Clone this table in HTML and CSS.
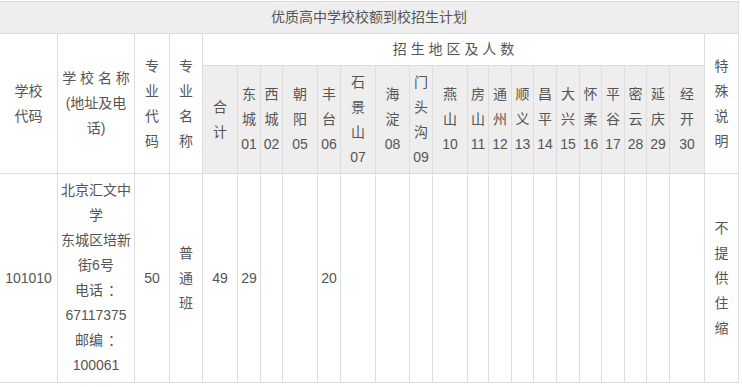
FILE: index.html
```html
<!DOCTYPE html>
<html lang="zh-CN">
<head>
<meta charset="utf-8">
<title>优质高中学校校额到校招生计划</title>
<link rel="stylesheet" href="styles.css">
</head>
<body>
<table class="plan">
  <colgroup>
    <col class="c58"><col class="c77"><col class="c35"><col class="c33">
    <col class="c35"><col class="c23"><col class="c22"><col class="c35"><col class="c23">
    <col class="c35"><col class="c34"><col class="c23"><col class="c35"><col class="c21">
    <col class="c23"><col class="c22"><col class="c23"><col class="c23"><col class="c22">
    <col class="c23"><col class="c22"><col class="c23"><col class="c35"><col class="c34">
  </colgroup>
  <tr class="row-title">
    <th class="title" colspan="24">优质高中学校校额到校招生计划</th>
  </tr>
  <tr class="row-head">
    <th rowspan="2">学校<br>代码</th>
    <th rowspan="2">学 校 名 称<br>(地址及电<br>话)</th>
    <th rowspan="2">专<br>业<br>代<br>码</th>
    <th rowspan="2">专<br>业<br>名<br>称</th>
    <th colspan="19">招 生 地 区 及 人 数</th>
    <th rowspan="2">特<br>殊<br>说<br>明</th>
  </tr>
  <tr class="row-sub">
    <th class="sub">合<br>计</th>
    <th class="sub">东<br>城<br>01</th>
    <th class="sub">西<br>城<br>02</th>
    <th class="sub">朝<br>阳<br>05</th>
    <th class="sub">丰<br>台<br>06</th>
    <th class="sub">石<br>景<br>山<br>07</th>
    <th class="sub">海<br>淀<br>08</th>
    <th class="sub">门<br>头<br>沟<br>09</th>
    <th class="sub">燕<br>山<br>10</th>
    <th class="sub">房<br>山<br>11</th>
    <th class="sub">通<br>州<br>12</th>
    <th class="sub">顺<br>义<br>13</th>
    <th class="sub">昌<br>平<br>14</th>
    <th class="sub">大<br>兴<br>15</th>
    <th class="sub">怀<br>柔<br>16</th>
    <th class="sub">平<br>谷<br>17</th>
    <th class="sub">密<br>云<br>28</th>
    <th class="sub">延<br>庆<br>29</th>
    <th class="sub">经<br>开<br>30</th>
  </tr>
  <tr class="row-data">
    <td>101010</td>
    <td>北京汇文中<br>学<br>东城区培新<br>街6号<br>电话<span class="fw">：</span><br>67117375<br>邮编<span class="fw">：</span><br>100061</td>
    <td>50</td>
    <td>普<br>通<br>班</td>
    <td>49</td>
    <td>29</td>
    <td></td>
    <td></td>
    <td>20</td>
    <td></td>
    <td></td>
    <td></td>
    <td></td>
    <td></td>
    <td></td>
    <td></td>
    <td></td>
    <td></td>
    <td></td>
    <td></td>
    <td></td>
    <td></td>
    <td></td>
    <td>不<br>提<br>供<br>住<br>缩</td>
  </tr>
</table>
</body>
</html>
```

FILE: styles.css
```css
html, body {
  margin: 0;
  padding: 0;
  background: #ffffff;
}

.plan {
  border-collapse: collapse;
  table-layout: fixed;
  width: 740px;
  margin: 1px 0 0 -1px;
  font-family: "Liberation Sans", "Noto Sans CJK SC", sans-serif;
  font-size: 14px;
  line-height: 25px;
  color: #555555;
}

.plan th,
.plan td {
  border: 1px solid #dddddd;
  padding: 0;
  text-align: center;
  vertical-align: middle;
  font-weight: normal;
  background: #ffffff;
  overflow: hidden;
}

.plan .title,
.plan .sub {
  background: #eeeeee;
}

/* full-width colon drawn centred in its em box, as in the source font */
.fw {
  padding-left: 5px;
  margin-right: -5px;
}

.row-title { height: 32px; }
.row-head { height: 32px; }
.row-sub { height: 108px; }
.row-data { height: 209px; }

.c58 { width: 58px; }
.c77 { width: 77px; }
.c35 { width: 35px; }
.c34 { width: 34px; }
.c33 { width: 33px; }
.c23 { width: 23px; }
.c22 { width: 22px; }
.c21 { width: 21px; }
```
